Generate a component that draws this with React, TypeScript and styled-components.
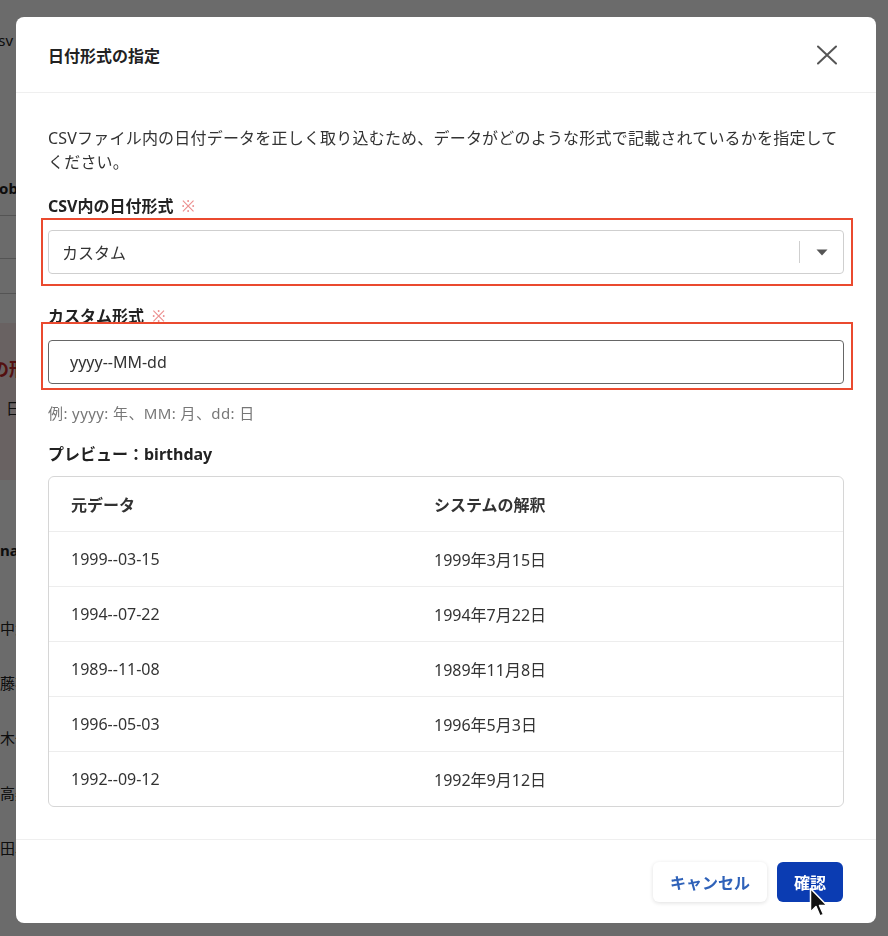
import React from "react";
import styled, { createGlobalStyle } from "styled-components";

const GlobalStyle = createGlobalStyle`
  * { box-sizing: border-box; }
  html, body { margin: 0; padding: 0; }
  body {
    font-family: "Noto Sans", "Noto Sans CJK JP", sans-serif;
    color: #333;
    background: #fff;
    overflow: hidden;
  }
`;

/* ---------- page behind the dialog (only its left edge shows) ---------- */

const Page = styled.div`
  width: 26px;
  height: 936px;
  margin-left: -9px;
  overflow: hidden;
  white-space: nowrap;
  display: flex;
  flex-direction: column;
  font-size: 15px;
  color: #222;
`;

const PageTitle = styled.div`
  padding-top: 30px;
  height: 178px;
`;

const SectionHead = styled.div`
  font-weight: 700;
  height: 37px;
  padding-left: 8px;
`;

const PageRow = styled.div<{ $h: number }>`
  height: ${(p) => p.$h}px;
  border-top: 1px solid #c8c8c8;
`;

const Alert = styled.div`
  margin-top: 29px;
  height: 157px;
  background: #fbe9e9;
  padding-top: 32px;
  display: flex;
  flex-direction: column;
  gap: 16px;
`;

const AlertTitle = styled.div`
  color: #c62828;
  font-weight: 700;
  font-size: 18px;
`;

const AlertText = styled.div`
  padding-left: 15px;
`;

const ListHead = styled.div`
  margin-top: 60px;
  height: 60px;
  font-weight: 700;
  padding-left: 9px;
`;

const ListRow = styled.div`
  height: 55px;
  padding-left: 9px;
  display: flex;
  align-items: center;
`;

/* ---------- dialog ---------- */

const Overlay = styled.div`
  position: fixed;
  inset: 0;
  background: rgba(0, 0, 0, 0.58);
  padding: 17px 12px 0 16px;
  display: flex;
  align-items: flex-start;
`;

const Modal = styled.div`
  width: 860px;
  background: #fff;
  border-radius: 8px;
  display: flex;
  flex-direction: column;
`;

const ModalHeader = styled.div`
  height: 76px;
  padding: 0 39px 0 32px;
  display: flex;
  align-items: center;
  justify-content: space-between;
  border-bottom: 1px solid #efefef;
`;

const Title = styled.h2`
  margin: 0;
  font-size: 16px;
  font-weight: 700;
  color: #222;
`;

const CloseButton = styled.button`
  width: 20px;
  height: 20px;
  padding: 0;
  border: 0;
  background: none;
  display: flex;
  align-items: center;
  justify-content: center;
  cursor: pointer;
`;

const ModalBody = styled.div`
  padding: 33px 32px 32px 32px;
  display: flex;
  flex-direction: column;
`;

const Description = styled.p`
  margin: 0;
  font-size: 16px;
  line-height: 24px;
  letter-spacing: 0.2px;
  color: #333;
`;

const Field = styled.div<{ $mt: number }>`
  margin-top: ${(p) => p.$mt}px;
  display: flex;
  flex-direction: column;
`;

const Label = styled.div`
  font-size: 16px;
  line-height: 24px;
  font-weight: 700;
  color: #222;
  margin-bottom: 12px;
`;

const Required = styled.span`
  color: #ec8f8f;
  font-weight: 400;
  margin-left: 8px;
`;

/* red annotation frame drawn around a control */
const Highlight = styled.div<{ $inset: string }>`
  position: relative;
  display: flex;
  flex-direction: column;
  &::after {
    content: "";
    position: absolute;
    inset: ${(p) => p.$inset};
    border: 2px solid #ea4a2f;
    pointer-events: none;
  }
`;

const Select = styled.div`
  height: 44px;
  border: 1px solid #cfcfcf;
  border-radius: 4px;
  display: flex;
  align-items: center;
  padding-left: 13px;
  font-size: 16px;
  color: #333;
`;

const SelectValue = styled.span`
  flex: 1;
`;

const SelectDivider = styled.span`
  width: 1px;
  height: 22px;
  background: #cfcfcf;
`;

const SelectArrow = styled.span`
  width: 43px;
  display: flex;
  align-items: center;
  justify-content: center;
`;

const TextInput = styled.input`
  width: 100%;
  height: 44px;
  border: 1px solid #666;
  border-radius: 4px;
  padding: 0 21px;
  font-family: inherit;
  font-size: 16px;
  color: #333;
  outline: none;
  background: #fff;
`;

const Hint = styled.div`
  margin-top: 18px;
  font-size: 15px;
  line-height: 22px;
  letter-spacing: 0.4px;
  color: #777;
`;

const PreviewTitle = styled.div`
  margin-top: 18px;
  font-size: 16px;
  line-height: 24px;
  font-weight: 700;
  color: #222;
`;

const Table = styled.div`
  margin-top: 10px;
  border: 1px solid #d6d6d6;
  border-radius: 6px;
  display: grid;
  grid-template-columns: 363px 1fr;
`;

const Cell = styled.div<{ $head?: boolean; $first?: boolean }>`
  height: ${(p) => (p.$head ? 54 : 55)}px;
  display: flex;
  align-items: center;
  padding-left: 22px;
  font-size: 16px;
  font-weight: ${(p) => (p.$head ? 700 : 400)};
  color: #333;
  border-top: ${(p) => (p.$first ? "none" : "1px solid #ededed")};
`;

const ModalFooter = styled.div`
  border-top: 1px solid #efefef;
  padding: 22px 33px 21px 32px;
  display: flex;
  justify-content: flex-end;
  gap: 10px;
`;

const Button = styled.button<{ $primary?: boolean }>`
  height: 40px;
  padding: 0 17px;
  border-radius: 6px;
  border: 0;
  font-family: inherit;
  font-size: 16px;
  font-weight: 700;
  cursor: pointer;
  color: ${(p) => (p.$primary ? "#fff" : "#2f62b9")};
  background: ${(p) => (p.$primary ? "#0b3cb2" : "#fff")};
  box-shadow: ${(p) =>
    p.$primary ? "none" : "0 1px 4px rgba(0, 0, 0, 0.13)"};
`;

const Pointer = styled.svg`
  position: fixed;
  left: 809px;
  top: 887px;
`;

const rows = [
  ["1999--03-15", "1999年3月15日"],
  ["1994--07-22", "1994年7月22日"],
  ["1989--11-08", "1989年11月8日"],
  ["1996--05-03", "1996年5月3日"],
  ["1992--09-12", "1992年9月12日"],
];

export default function App() {
  return (
    <>
      <GlobalStyle />
      <Page aria-hidden="true">
        <PageTitle>csv</PageTitle>
        <SectionHead>ob</SectionHead>
        <PageRow $h={43} />
        <PageRow $h={35} />
        <PageRow $h={0} />
        <Alert>
          <AlertTitle>の形</AlertTitle>
          <AlertText>日付</AlertText>
        </Alert>
        <ListHead>name</ListHead>
        <ListRow>中大</ListRow>
        <ListRow>藤花</ListRow>
        <ListRow>木一</ListRow>
        <ListRow>高美</ListRow>
        <ListRow>田次</ListRow>
      </Page>

      <Overlay>
        <Modal role="dialog" aria-modal="true">
          <ModalHeader>
            <Title>日付形式の指定</Title>
            <CloseButton aria-label="閉じる">
              <svg width="20" height="20" viewBox="0 0 20 20">
                <path
                  d="M1 1.5 L19 18.5 M19 1.5 L1 18.5"
                  stroke="#555"
                  strokeWidth="2"
                  strokeLinecap="round"
                />
              </svg>
            </CloseButton>
          </ModalHeader>

          <ModalBody>
            <Description>
              CSVファイル内の日付データを正しく取り込むため、データがどのような形式で記載されているかを指定してください。
            </Description>

            <Field $mt={20}>
              <Label>
                CSV内の日付形式<Required>※</Required>
              </Label>
              <Highlight $inset="-12px -9px -12px -7px">
                <Select>
                  <SelectValue>カスタム</SelectValue>
                  <SelectDivider />
                  <SelectArrow>
                    <svg width="12" height="7" viewBox="0 0 12 7">
                      <path d="M0.5 0.5 H11.5 L6 6.5 Z" fill="#555" />
                    </svg>
                  </SelectArrow>
                </Select>
              </Highlight>
            </Field>

            <Field $mt={30}>
              <Label>
                カスタム形式<Required>※</Required>
              </Label>
              <Highlight $inset="-18px -9px -6px -7px">
                <TextInput defaultValue="yyyy--MM-dd" />
              </Highlight>
              <Hint>例: yyyy: 年、MM: 月、dd: 日</Hint>
            </Field>

            <PreviewTitle>プレビュー：birthday</PreviewTitle>
            <Table>
              <Cell $head $first>元データ</Cell>
              <Cell $head $first>システムの解釈</Cell>
              {rows.map(([raw, parsed]) => (
                <React.Fragment key={raw}>
                  <Cell>{raw}</Cell>
                  <Cell>{parsed}</Cell>
                </React.Fragment>
              ))}
            </Table>
          </ModalBody>

          <ModalFooter>
            <Button>キャンセル</Button>
            <Button $primary>確認</Button>
          </ModalFooter>
        </Modal>
      </Overlay>

      <Pointer width="20" height="32" viewBox="0 0 20 32">
        <path
          d="M1.5 1.5 L1.5 25 L7 19.5 L11 29 L14.5 27.5 L10.5 18.5 L18 18.5 Z"
          fill="#111"
          stroke="#fff"
          strokeWidth="1.5"
          strokeLinejoin="round"
        />
      </Pointer>
    </>
  );
}
